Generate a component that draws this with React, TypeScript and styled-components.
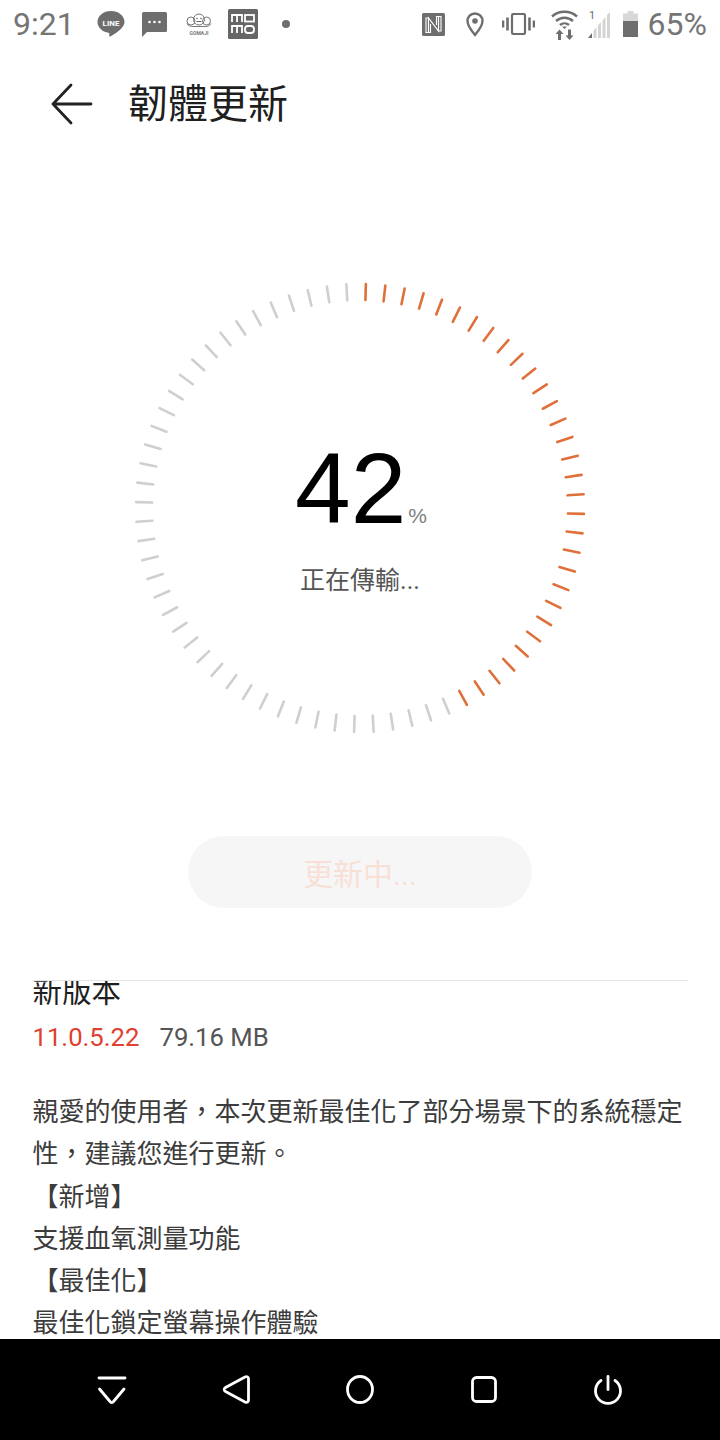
import styled, { createGlobalStyle } from "styled-components";

const GlobalStyle = createGlobalStyle`
  html, body {
    margin: 0;
    padding: 0;
    background: #fff;
  }
  body {
    font-family: Roboto, "Noto Sans CJK TC", sans-serif;
  }
`;

const Page = styled.div`
  width: 720px;
  height: 1440px;
  display: flex;
  flex-direction: column;
  overflow: hidden;
  background: #fff;
`;

const StatusBar = styled.div`
  height: 48px;
  flex: none;
  display: flex;
  align-items: center;
  padding: 0 13px;
  color: #757575;
`;

const StatusText = styled.span<{ $gap?: number }>`
  font-size: 32px;
  line-height: 48px;
  margin-left: ${(p) => p.$gap ?? 0}px;
`;

const Spacer = styled.div`
  flex: 1;
`;

const Glyph = styled.svg<{ $gap: number }>`
  display: block;
  flex: none;
  margin-left: ${(p) => p.$gap}px;
`;

const Header = styled.div`
  height: 112px;
  flex: none;
  display: flex;
  align-items: center;
  padding-left: 50px;
`;

const Title = styled.h1`
  margin: 2px 0 0 34px;
  font-size: 40px;
  font-weight: 400;
  line-height: 110px;
  color: #1f1f1f;
`;

const Content = styled.div`
  flex: 1;
  min-height: 0;
  overflow: hidden;
  display: flex;
  flex-direction: column;
`;

const Dial = styled.div`
  margin-top: 120px;
  height: 456px;
  display: grid;
  justify-items: center;
  align-items: center;
  flex: none;
`;

const DialRing = styled.svg`
  grid-area: 1 / 1;
  display: block;
`;

const DialCenter = styled.div`
  grid-area: 1 / 1;
  display: flex;
  flex-direction: column;
  align-items: center;
  margin-top: 20px;
`;

const Percent = styled.div`
  display: flex;
  align-items: baseline;
  font-family: "Liberation Sans", Arial, sans-serif;
  color: #000;
  padding-left: 2px;
`;

const PercentValue = styled.span`
  font-size: 100px;
  line-height: 100px;
`;

const PercentSign = styled.span`
  font-size: 21px;
  line-height: 21px;
  color: #808080;
  margin-left: 2px;
`;

const DialLabel = styled.div`
  margin-top: 26px;
  font-size: 25px;
  line-height: 34px;
  color: #555;
`;

const UpdateButton = styled.div`
  align-self: center;
  margin-top: 100px;
  width: 344px;
  height: 72px;
  flex: none;
  display: flex;
  align-items: center;
  justify-content: center;
  border-radius: 36px;
  background: #f6f6f6;
  color: #f8e0d6;
  font-size: 30px;
`;

const Divider = styled.div`
  margin: 72px 32px 0 33px;
  height: 1px;
  flex: none;
  background: #e4e4e4;
`;

const Section = styled.div`
  padding: 0 30px 0 32.5px;
  overflow: hidden;
  flex: 1;
  min-height: 0;
`;

const SectionTitle = styled.div`
  font-size: 29.5px;
  line-height: 22px;
  color: #1f1f1f;
`;

const VersionRow = styled.div`
  display: flex;
  gap: 20px;
  margin-top: 16px;
  font-size: 25.7px;
  line-height: 36px;
`;

const VersionNumber = styled.span`
  color: #e0402f;
`;

const VersionSize = styled.span`
  color: #555;
`;

const Notes = styled.div`
  margin-top: 36px;
  font-size: 26px;
  line-height: 42.3px;
  color: #3c3c3c;
`;

const NavBar = styled.div`
  height: 101px;
  flex: none;
  background: #000;
  display: flex;
  align-items: flex-start;
  justify-content: center;
  gap: 76px;
  padding-top: 35px;
  box-sizing: border-box;
`;

const NavIcon = styled.svg`
  display: block;
  width: 48px;
  height: 32px;
  fill: none;
  stroke: #fff;
  stroke-width: 2.8;
  stroke-linecap: round;
  stroke-linejoin: round;
`;

const TICKS = 72;
const ACTIVE = 31;

const ticks = Array.from({ length: TICKS }, (_, i) => 1.5 + i * 5);

export default function App() {
  return (
    <Page>
      <GlobalStyle />
      <StatusBar>
        <StatusText>9:21</StatusText>
        {/* LINE */}
        <Glyph $gap={22} width="28" height="28" viewBox="0 0 28 28">
          <path d="M14 1C6.5 1 .5 5.9.5 12c0 5.4 4.8 9.9 11 10.8.9.2 1 .8.8 1.8-.1.8-.3 2.4 1 1.8 2-1 8.5-5 11.2-8.2C26.600 16 27.500 14.100 27.500 12 27.500 5.900 21.500 1 14 1z" fill="#6e6e6e" />
          <text x="14" y="15.500" textAnchor="middle" fontSize="8" fontWeight="700" fontFamily="Roboto, sans-serif" fill="#fff">LINE</text>
        </Glyph>
        {/* message */}
        <Glyph $gap={17} width="25" height="25" viewBox="0 0 25 25">
          <path d="M1.500 0h22A1.500 1.500 0 0 1 25 1.500v17a1.500 1.500 0 0 1-1.500 1.500H5l-5 5V1.500A1.500 1.500 0 0 1 1.500 0z" fill="#6e6e6e" />
          <circle cx="7.500" cy="10" r="1.300" fill="#fff" />
          <circle cx="12.500" cy="10" r="1.300" fill="#fff" />
          <circle cx="17.500" cy="10" r="1.300" fill="#fff" />
        </Glyph>
        {/* GOMAJI */}
        <Glyph $gap={18} width="28" height="24" viewBox="0 0 28 24">
          <g fill="none" stroke="#777" strokeWidth="1">
            <circle cx="14" cy="7.500" r="5.500" />
            <circle cx="6" cy="9" r="4" />
            <circle cx="21.500" cy="9" r="4" />
            <path d="M2 11.500c1 2.500 4 3 6 3h12c3 0 5-1 6-3" />
          </g>
          <circle cx="12" cy="6.500" r="0.800" fill="#666" />
          <circle cx="16" cy="6.500" r="0.800" fill="#666" />
          <path d="M11.500 9.500h5" stroke="#666" strokeWidth="1" />
          <text x="14" y="23" textAnchor="middle" fontSize="5" fontWeight="700" fontFamily="Roboto, sans-serif" fill="#777">GOMAJI</text>
        </Glyph>
        {/* momo */}
        <Glyph $gap={15} width="30" height="30" viewBox="0 0 30 30">
          <rect width="30" height="30" rx="1.500" fill="#666" />
          <g fill="none" stroke="#fff" strokeWidth="1.800">
            <path d="M4 13V6h10v7M9 6v7" />
            <rect x="17" y="6" width="9" height="6.500" />
            <path d="M4 24v-7h10v7M9 17v7" />
            <rect x="17" y="17" width="9" height="7" rx="3" />
          </g>
        </Glyph>
        <Glyph $gap={24} width="8" height="8" viewBox="0 0 8 8">
          <circle cx="4" cy="4" r="4" fill="#6e6e6e" />
        </Glyph>
        <Spacer />
        {/* NFC */}
        <Glyph $gap={0} width="23" height="23" viewBox="0 0 23 23">
          <path d="M1.500 0h20A1.500 1.500 0 0 1 23 1.500v20a1.500 1.500 0 0 1-1.500 1.500h-20A1.500 1.500 0 0 1 0 21.500v-20A1.500 1.500 0 0 1 1.500 0z" fill="#6e6e6e" />
          <path d="M6.500 19V5l10 13V4" fill="none" stroke="#fff" strokeWidth="1.200" />
          <path d="M6.500 5H4v14.500h4.500V11M16.500 18H19V3.500h-4.500V12" fill="none" stroke="#fff" strokeWidth="1.100" />
        </Glyph>
        {/* location */}
        <Glyph $gap={21} width="18" height="25" viewBox="0 0 18 25">
          <path d="M9 1.500c-4.300 0-7.500 3.300-7.500 7.500 0 5 7.500 14 7.500 14s7.500-9 7.500-14c0-4.200-3.200-7.500-7.500-7.500z" fill="none" stroke="#6e6e6e" strokeWidth="2.400" />
          <circle cx="9" cy="9" r="2.800" fill="#6e6e6e" />
        </Glyph>
        {/* vibrate */}
        <Glyph $gap={18} width="33" height="22" viewBox="0 0 33 22">
          <rect x="10" y="1" width="13" height="20" rx="1.500" fill="none" stroke="#6e6e6e" strokeWidth="2.200" />
          <path d="M5.500 4.500v13M1 7.500v7M27.500 4.500v13M32 7.500v7" stroke="#6e6e6e" strokeWidth="2.600" />
        </Glyph>
        {/* wifi with traffic arrows */}
        <Glyph $gap={16} width="27" height="31" viewBox="0 0 27 31">
          <g fill="none" stroke="#6e6e6e" strokeWidth="2.400">
            <path d="M1 7.500C8 1.200 19 1.200 26 7.500" />
            <path d="M5 12C10 7.600 17 7.600 22 12" />
            <path d="M9 16c2.600-2.200 6.400-2.200 9 0" />
          </g>
          <path d="M13.500 20l-2.500-2.500h5z" fill="#6e6e6e" />
          <path d="M8.500 20.500l4 4.500H10v6H7v-6H4.500zM18.500 31l-4-4.500H17v-6h3v6h2.500z" fill="#6e6e6e" />
        </Glyph>
        {/* signal */}
        <Glyph $gap={10} width="23" height="28" viewBox="0 0 23 28">
          <path d="M22 2v26h-3V5zM17.500 7v21h-3V10.500zM13 12v16h-3V15.500zM8.500 17v11h-3v-7z" fill="#d4d4d4" />
          <path d="M4 23v5H0z" fill="#6e6e6e" />
          <text x="1" y="9" fontSize="11" fontFamily="Roboto, sans-serif" fill="#6e6e6e">1</text>
        </Glyph>
        {/* battery */}
        <Glyph $gap={12} width="15" height="26" viewBox="0 0 15 26">
          <path d="M4.500 0h6v2.500H15V26H0V2.500h4.500z" fill="#d8d8d8" />
          <rect y="10" width="15" height="16" fill="#6e6e6e" />
        </Glyph>
        <StatusText $gap={10}>65%</StatusText>
      </StatusBar>

      <Header>
        <svg width="44" height="44" viewBox="0 0 44 44" fill="none" stroke="#222" strokeWidth="2.800" strokeLinecap="round" strokeLinejoin="round">
          <path d="M3 22h38M21 3L3 22l18 19" />
        </svg>
        <Title>韌體更新</Title>
      </Header>

      <Content>
        <Dial>
          <DialRing width="456" height="456" viewBox="-228 -228 456 456">
            {ticks.map((deg, i) => (
              <line
                key={deg}
                x1="0"
                y1="-224"
                x2="0"
                y2="-208"
                stroke={i < ACTIVE ? "#e0703a" : "#cfcfcf"}
                strokeWidth="2.600"
                strokeLinecap="round"
                transform={`rotate(${deg})`}
              />
            ))}
          </DialRing>
          <DialCenter>
            <Percent>
              <PercentValue>42</PercentValue>
              <PercentSign>%</PercentSign>
            </Percent>
            <DialLabel>正在傳輸...</DialLabel>
          </DialCenter>
        </Dial>

        <UpdateButton>更新中...</UpdateButton>

        <Divider />

        <Section>
          <SectionTitle>新版本</SectionTitle>
          <VersionRow>
            <VersionNumber>11.0.5.22</VersionNumber>
            <VersionSize>79.16 MB</VersionSize>
          </VersionRow>
          <Notes>
            親愛的使用者，本次更新最佳化了部分場景下的系統穩定性，建議您進行更新。
            <br />
            【新增】
            <br />
            支援血氧測量功能
            <br />
            【最佳化】
            <br />
            最佳化鎖定螢幕操作體驗
          </Notes>
        </Section>
      </Content>

      <NavBar>
        <NavIcon viewBox="0 0 48 32">
          <path d="M11 4h26" />
          <path d="M11.500 15l10.500 12.500a2 2 0 0 0 3.500 0L36 15" />
        </NavIcon>
        <NavIcon viewBox="0 0 48 32">
          <path d="M13.500 13.500L33 3c2-1 3.500 0 3.500 2v21c0 2-1.500 3-3.500 2L13.500 17.500c-1.800-1-1.800-3 0-4z" />
        </NavIcon>
        <NavIcon viewBox="0 0 48 32">
          <ellipse cx="24" cy="15.500" rx="12.500" ry="13" />
        </NavIcon>
        <NavIcon viewBox="0 0 48 32">
          <rect x="12.500" y="3.500" width="23" height="24" rx="4" />
        </NavIcon>
        <NavIcon viewBox="0 0 48 32">
          <path d="M24 2.500v13" />
          <path d="M17 6.500a12.500 12.500 0 1 0 14 0" />
        </NavIcon>
      </NavBar>
    </Page>
  );
}
